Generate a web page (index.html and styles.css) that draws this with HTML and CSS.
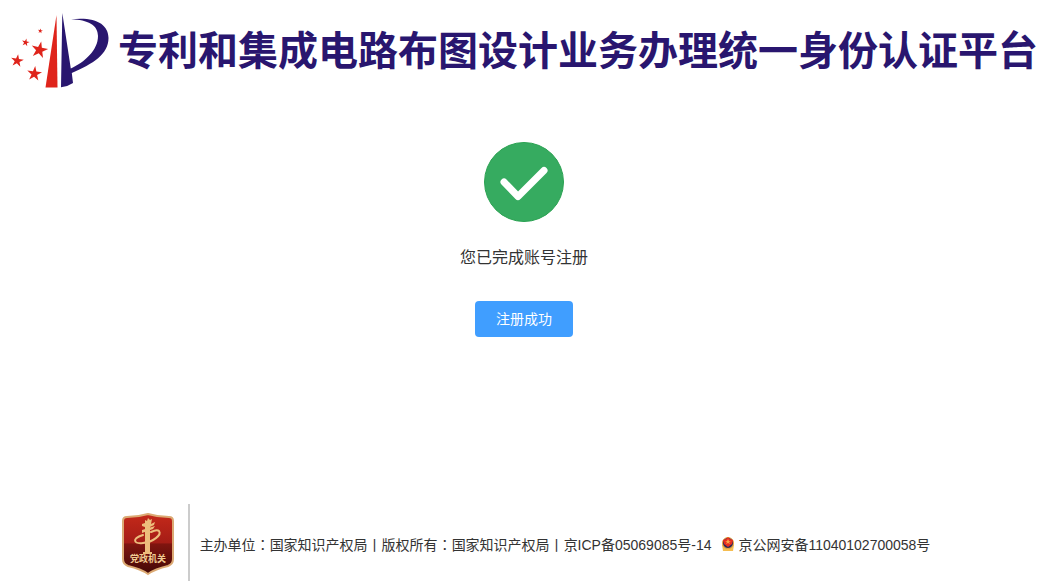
FILE: index.html
```html
<!DOCTYPE html>
<html lang="zh-CN">
<head>
  <meta charset="UTF-8" />
  <meta name="viewport" content="width=device-width, initial-scale=1.0"/>
  <title>专利和集成电路布图设计业务办理统一身份认证平台</title>
  <link rel="stylesheet" href="styles.css">
</head>
<body>

  <header class="header">
    <svg class="logo" viewBox="0 0 110 100" aria-hidden="true">
      <defs>
        <path id="star" d="M0-10L2.2-3.1H9.5L3.6 1.2L5.9 8.1L0 3.8L-5.9 8.1L-3.6 1.2L-9.5-3.1H-2.2Z" />
      </defs>
      <g fill="#df241b">
        <path d="M56.5 15L57.5 87.5H45.5Z" />
        <use href="#star" transform="translate(40.3 31) rotate(8) scale(0.26)" />
        <use href="#star" transform="translate(25.6 42.5) rotate(12) scale(0.4)" />
        <use href="#star" transform="translate(39.4 50) rotate(12) scale(0.88)" />
        <use href="#star" transform="translate(17.2 60.8) rotate(8) scale(0.67)" />
        <use href="#star" transform="translate(34.4 73.8) rotate(6) scale(0.78)" />
      </g>
      <path fill="#29166f" d="M62.3 13L70.8 68.5C85 62 98 50 98 36C98 25 88 20 71 19.3C95 16.5 108.5 24 108.5 38C108.5 54 93 64 71.8 73L73 83Q68 86.5 61 87.3Z" />
    </svg>
    <h1>专利和集成电路布图设计业务办理统一身份认证平台</h1>
  </header>

  <main class="result">
    <svg class="success-icon" viewBox="0 0 80 80" aria-hidden="true">
      <circle cx="40" cy="40" r="39.5" fill="#36ab60" stroke="#2ba252" />
      <path d="M20 40L34 54.5L60 28.5" fill="none" stroke="#fff" stroke-width="7" stroke-linecap="round" stroke-linejoin="round" />
    </svg>
    <p>您已完成账号注册</p>
    <button type="button">注册成功</button>
  </main>

  <footer class="footer">
    <div class="badge">
      <svg viewBox="0 0 54 64" role="img" aria-label="党政机关">
        <defs>
          <linearGradient id="shield" x1="0" y1="0" x2="0" y2="1">
            <stop offset="0" stop-color="#c4291a" />
            <stop offset="0.48" stop-color="#a51d16" />
            <stop offset="0.5" stop-color="#80150f" />
            <stop offset="1" stop-color="#420906" />
          </linearGradient>
        </defs>
        <path d="M27 2Q37 5 48 5Q52 5 52 9V47Q52 52 47 54Q34 57 27 62Q20 57 7 54Q2 52 2 47V9Q2 5 6 5Q17 5 27 2Z" fill="url(#shield)" stroke="#dcaa74" stroke-width="2" />
        <g fill="#edbd7c">
          <path d="M24 8l2 1 1-3 2 2 2-1-1 5 4-2-1 3-4 2v25h2v2h-9v-2h2V15l-3-1v-2l3-1z" />
          <path d="M21 18l13-4-2 3-11 4z" />
        </g>
        <path d="M22 23C10 27 13 32 22 31C32 30 41 23 38 19Q36 17 30 20" fill="none" stroke="#edbd7c" stroke-width="2" stroke-linecap="round" />
        <text x="27" y="50" text-anchor="middle">党政机关</text>
      </svg>
    </div>
    <p class="copyright">
      主办单位<span class="colon" lang="zh-TW">：</span>国家知识产权局丨版权所有<span class="colon" lang="zh-TW">：</span>国家知识产权局丨<a href="#">京ICP备05069085号-14</a>
      <a class="police" href="#"><svg viewBox="0 0 14 16" aria-hidden="true">
          <path d="M1 9L2 15H12L13 9Z" fill="#f5bd51" />
          <circle cx="7" cy="7" r="5.5" fill="#29265b" stroke="#efaa3b" />
          <path d="M7 1L9 3 12 4 11 8 7 11 3 8 2 4 5 3Z" fill="#e72d20" />
          <path d="M7 3l1 2h2L8 6l1 2-2-1-2 1 1-2-2-1h2z" fill="#f9a347" />
        </svg>京公网安备11040102700058号</a>
    </p>
  </footer>

</body>
</html>
```
FILE: styles.css
```css
* {
  box-sizing: border-box;
}

body {
  display: flex;
  flex-direction: column;
  min-height: 100vh;
  margin: 0;
  padding-right: 13px;
  background: #fff;
  color: #333;
  font-family: "Liberation Sans", "Noto Sans CJK SC", sans-serif;
}

h1, p {
  margin: 0;
}

a {
  color: inherit;
  text-decoration: none;
}

.header {
  display: flex;
  align-items: center;
  gap: 8px;
}

.logo {
  flex: none;
  width: 110px;
  height: 100px;
}

.header h1 {
  padding-top: 2px;
  color: #29166f;
  font-size: 40px;
  line-height: 60px;
  white-space: nowrap;
}

.result {
  display: flex;
  flex-direction: column;
  align-items: center;
  padding: 42px 0 32px;
}

.success-icon {
  width: 80px;
  height: 80px;
}

.result p {
  margin: 24px 0 31px;
  font-size: 16px;
  line-height: 24px;
}

.result button {
  height: 36px;
  padding: 0 21px 2px;
  border: none;
  border-radius: 4px;
  background: #409eff;
  color: #fff;
  font-family: inherit;
  font-size: 14px;
  cursor: pointer;
}

.footer {
  display: flex;
  align-items: center;
  justify-content: center;
  margin-top: auto;
  padding-left: 3px;
}

.badge {
  display: flex;
  align-items: center;
  height: 77px;
  padding: 2px 13px 0 0;
  border-right: 2px solid #ccc;
}

.badge svg {
  width: 54px;
  height: 64px;
}

.badge text {
  fill: #f0cc93;
  font-family: "Noto Sans CJK SC", sans-serif;
  font-size: 9px;
  font-weight: bold;
}

.copyright {
  padding: 4px 0 0 10px;
  font-size: 14px;
  line-height: 20px;
}

.colon {
  font-family: "Noto Sans CJK TC", sans-serif;
}

.police {
  display: inline-block;
  margin-left: 6px;
}

.police svg {
  width: 14px;
  height: 16px;
  margin-right: 3px;
  vertical-align: -2px;
}
```
